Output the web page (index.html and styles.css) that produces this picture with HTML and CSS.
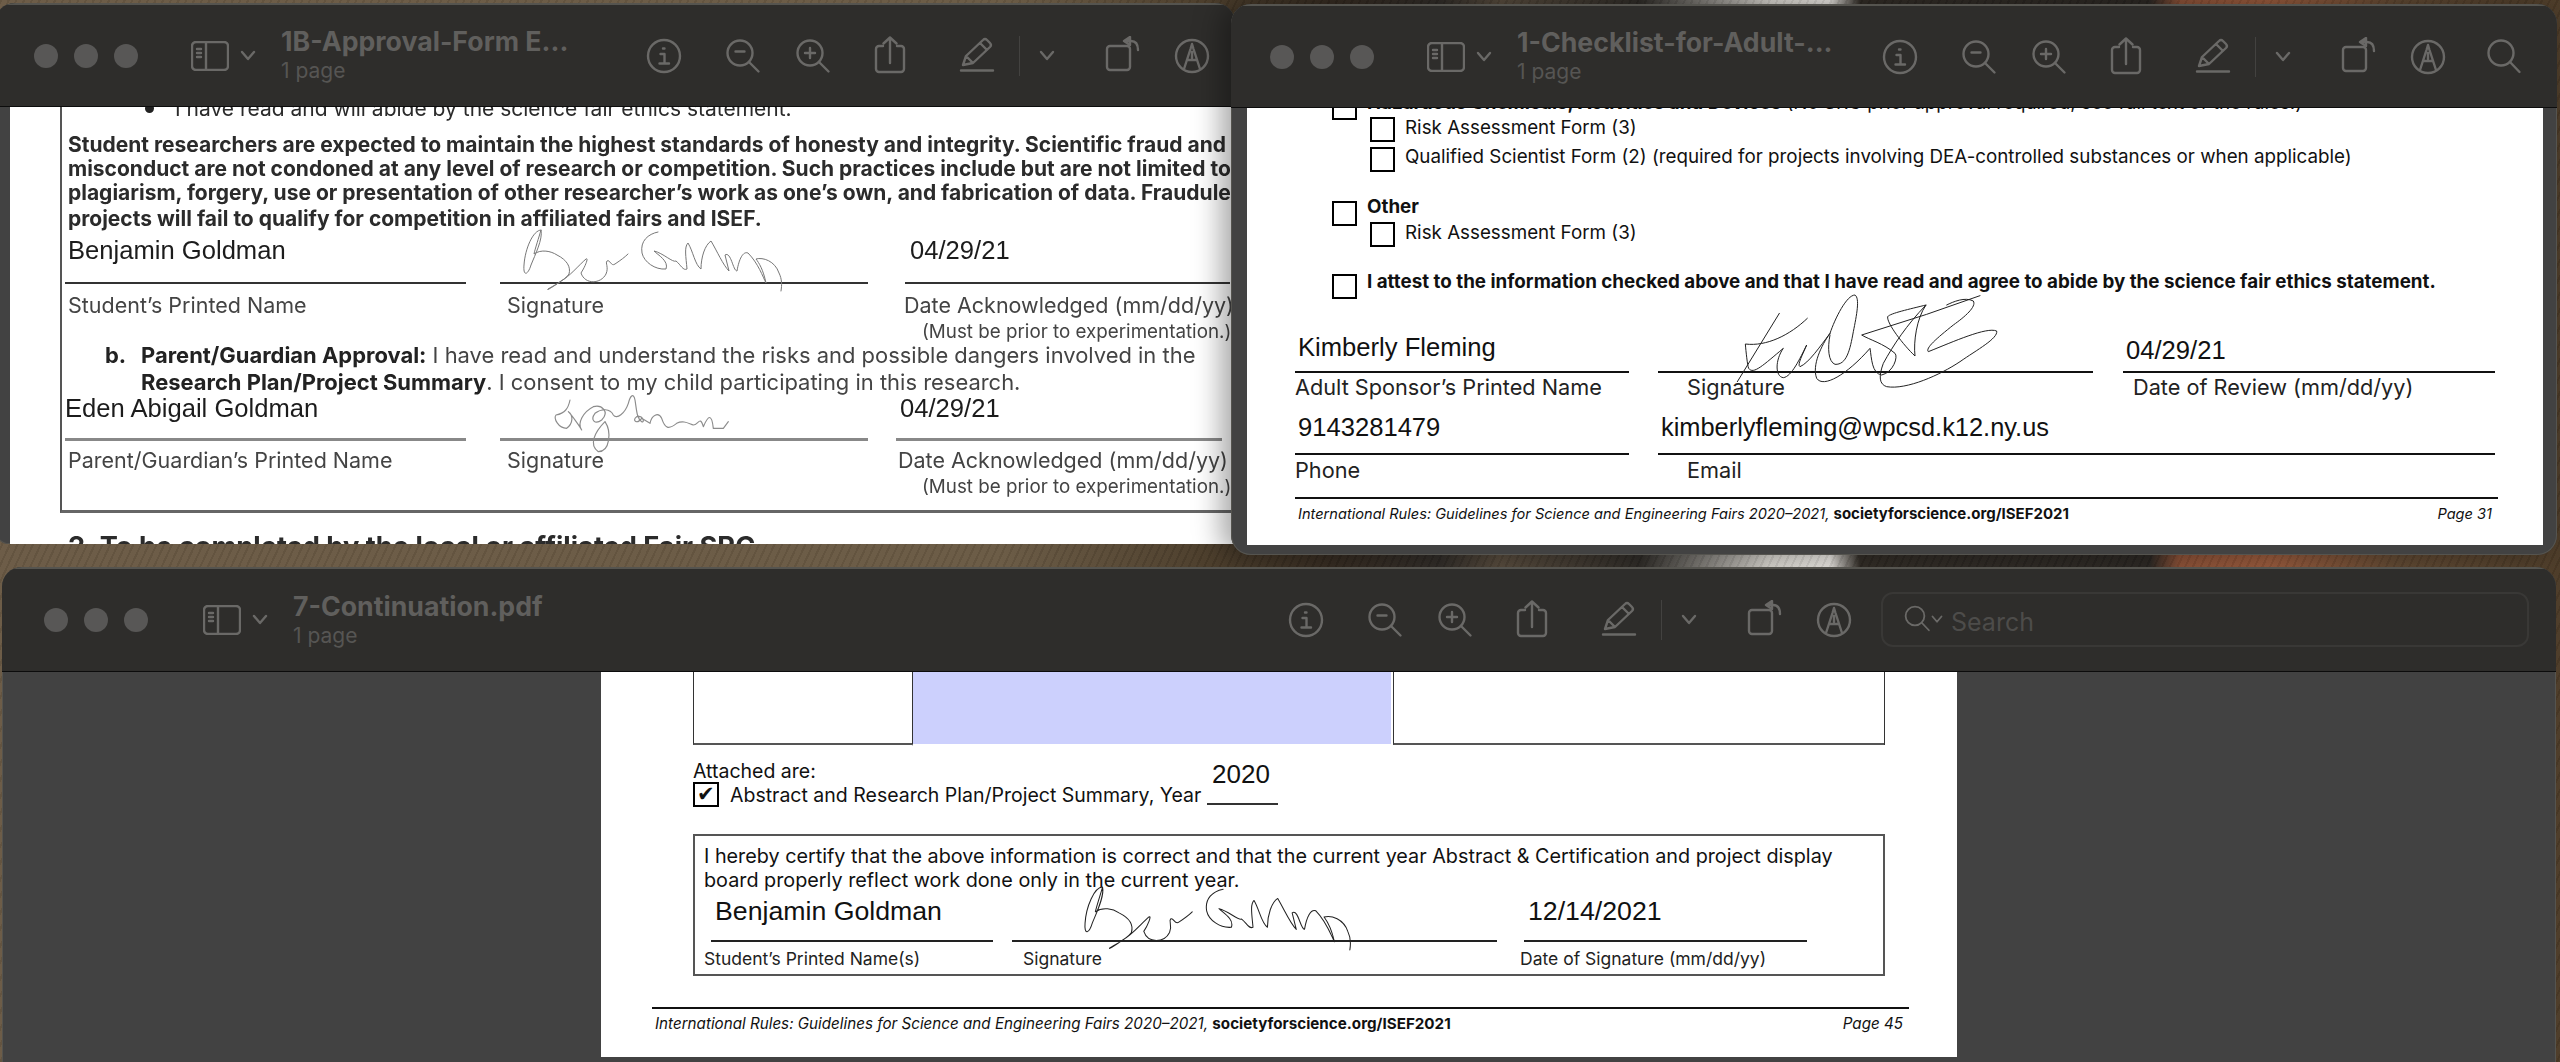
FILE: index.html
```html
<!DOCTYPE html>
<html lang="en">
<head>
  <meta charset="UTF-8">
  <meta name="viewport" content="width=device-width, initial-scale=1.0">
  <title>Preview windows</title>
  <link rel="stylesheet" href="styles.css">
</head>
<body>
  <svg class="defs" aria-hidden="true">
    <symbol id="i-sidebar" viewBox="0 0 38 30"><rect x="1" y="1" width="36" height="28" rx="4"/><path d="M15 1V29M6 8H10M6 12H10M6 16H10"/></symbol>
    <symbol id="i-chev" viewBox="0 0 16 12"><path d="M2 2L8 9L14 2"/></symbol>
    <symbol id="i-info" viewBox="0 0 40 40"><circle cx="20" cy="20" r="16"/><path d="M19 12.5H20.5M16.5 18H20.5V27.5M15.5 27.5H25"/></symbol>
    <symbol id="i-zoomout" viewBox="0 0 40 40"><circle cx="18" cy="17" r="12.5"/><path d="M27 26L36.5 35.5M13.5 15.5H22.5"/></symbol>
    <symbol id="i-zoomin" viewBox="0 0 40 40"><circle cx="18" cy="17" r="12.5"/><path d="M27 26L36.5 35.5M13 17H23M18 12V22"/></symbol>
    <symbol id="i-share" viewBox="0 0 40 40"><path d="M13 10H9A3 3 0 0 0 6 13V33A3 3 0 0 0 9 36H31A3 3 0 0 0 34 33V13A3 3 0 0 0 31 10H27M20 27V1.5M13.5 7.5L20 1.5L26.5 7.5"/></symbol>
    <symbol id="i-pen" viewBox="0 0 40 40"><path d="M6 29L9 20L26 4Q28 2 30 4L33 7Q35 9 33 11L16 27ZM9 20L16 27M23 7L30 14M4 34.5H36"/></symbol>
    <symbol id="i-rotate" viewBox="0 0 40 40"><rect x="6" y="10" width="23" height="24" rx="3"/><path d="M25 5H30C35 5 37 9 37 14"/><path class="fill" d="M23 5L29 1V9Z"/></symbol>
    <symbol id="i-markup" viewBox="0 0 40 40"><circle cx="20" cy="20" r="16"/><path d="M12 33L18.5 13L20 8L21.5 13L28 33M15.5 24H24.5M20 16V22"/></symbol>
    <symbol id="i-search" viewBox="0 0 40 40"><circle cx="16" cy="16" r="12.5"/><path d="M25 25L34.5 35"/></symbol>

    <symbol id="sig-ben" viewBox="0 0 262 66"><path d="M18 3C10 3 2 22 1 38C0 50 5 48 8 38C12 28 20 12 18 3C16 10 12 22 11 27C18 22 28 24 34 28C44 33 48 40 46 47C42 53 30 59 25 62C23 64 30 60 38 54C46 50 56 38 63 32C66 30 62 40 58 46C62 58 78 57 83 47C86 40 82 36 84 34C87 32 88 40 92 37C98 33 102 30 105 27"/><path d="M135 5C125 7 117 14 119 26C121 35 132 43 143 42C146 34 135 28 131 24C140 26 150 36 153 34C158 38 160 44 164 42C163 30 161 20 165 16C170 24 172 38 178 42C178 30 182 18 188 14C194 24 200 38 206 44L202 28C208 24 210 44 214 44C216 32 220 24 225 26C235 36 240 50 243 56C240 42 236 36 233 32C240 30 252 34 256 46C259 52 259 58 258 64"/></symbol>
  </svg>

  <section class="window win-a">
    <header class="toolbar">
      <div class="lights"><i></i><i></i><i></i></div>
      <svg class="ic-sidebar"><use href="#i-sidebar"/></svg>
      <svg class="ic-chev ic-side-chev"><use href="#i-chev"/></svg>
      <div class="titles">
        <div class="title">1B-Approval-Form E...</div>
        <div class="subtitle">1 page</div>
      </div>
      <svg class="tool"><use href="#i-info"/></svg>
      <svg class="tool t-out"><use href="#i-zoomout"/></svg>
      <svg class="tool t-in"><use href="#i-zoomin"/></svg>
      <svg class="tool t-share"><use href="#i-share"/></svg>
      <svg class="tool t-pen"><use href="#i-pen"/></svg>
      <span class="divider"></span>
      <svg class="ic-chev t-chev"><use href="#i-chev"/></svg>
      <svg class="tool t-rotate"><use href="#i-rotate"/></svg>
      <svg class="tool t-markup"><use href="#i-markup"/></svg>
    </header>
    <div class="content">
      <div class="page page-a">
        <div class="approval-box">
          <div class="bullet"><span class="dot"></span>I have read and will abide by the science fair ethics statement.</div>
          <p class="honesty">Student researchers are expected to maintain the highest standards of honesty and integrity. Scientific fraud and<br>misconduct are not condoned at any level of research or competition. Such practices include but are not limited to<br>plagiarism, forgery, use or presentation of other researcher’s work as one’s own, and fabrication of data. Fraudulent</p>
          <p class="honesty honesty-end">projects will fail to qualify for competition in affiliated fairs and ISEF.</p>

          <div class="fields row-student">
            <div class="f1"><div class="val">Benjamin Goldman</div><div class="lbl">Student’s Printed Name</div></div>
            <div class="f2"><div class="val"></div><div class="lbl">Signature</div></div>
            <div class="f3"><div class="val">04/29/21</div><div class="lbl">Date Acknowledged (mm/dd/yy)</div><div class="must">(Must be prior to experimentation.)</div></div>
          </div>

          <p class="consent"><b class="letter">b.</b><b>Parent/Guardian Approval:</b> I have read and understand the risks and possible dangers involved in the<br><b>Research Plan/Project Summary</b>. I consent to my child participating in this research.</p>

          <div class="fields row-parent">
            <div class="f1"><div class="val">Eden Abigail Goldman</div><div class="lbl">Parent/Guardian’s Printed Name</div></div>
            <div class="f2"><div class="val"></div><div class="lbl">Signature</div></div>
            <div class="f3"><div class="val">04/29/21</div><div class="lbl">Date Acknowledged (mm/dd/yy)</div><div class="must">(Must be prior to experimentation.)</div></div>
          </div>
        </div>
        <h2 class="next-step">2. To be completed by the local or affiliated Fair SRC</h2>
      </div>
      <svg class="sig sig-a1"><use href="#sig-ben"/></svg>
      <svg class="sig sig-a2" viewBox="0 0 720 300"><path d="M120 15C115 40 105 55 78 60C70 70 85 100 110 100C130 85 130 60 115 50C125 60 150 95 155 105C140 85 160 50 190 35C215 28 240 50 215 75C195 90 180 75 195 55C215 40 240 40 250 60C260 75 285 55 295 25C300 5 310 -10 315 15C320 45 320 70 335 80C345 85 340 60 320 65C305 75 320 90 335 70L360 85C365 60 385 50 395 70C405 100 415 105 440 85C460 75 475 85 490 90C505 90 510 60 520 95C535 60 545 55 550 100L580 100L595 80"/><path d="M225 80C245 110 240 170 205 170C175 150 195 110 225 80"/></svg>
    </div>
  </section>

  <section class="window win-b">
    <header class="toolbar">
      <div class="lights"><i></i><i></i><i></i></div>
      <svg class="ic-sidebar"><use href="#i-sidebar"/></svg>
      <svg class="ic-chev ic-side-chev"><use href="#i-chev"/></svg>
      <div class="titles">
        <div class="title">1-Checklist-for-Adult-...</div>
        <div class="subtitle">1 page</div>
      </div>
      <svg class="tool"><use href="#i-info"/></svg>
      <svg class="tool t-out"><use href="#i-zoomout"/></svg>
      <svg class="tool t-in"><use href="#i-zoomin"/></svg>
      <svg class="tool t-share"><use href="#i-share"/></svg>
      <svg class="tool t-pen"><use href="#i-pen"/></svg>
      <span class="divider"></span>
      <svg class="ic-chev t-chev"><use href="#i-chev"/></svg>
      <svg class="tool t-rotate"><use href="#i-rotate"/></svg>
      <svg class="tool t-markup"><use href="#i-markup"/></svg>
      <svg class="tool t-find"><use href="#i-search"/></svg>
    </header>
    <div class="content">
      <div class="page page-b">
        <div class="check main first"><span class="box"></span><span><b>Hazardous Chemicals, Activities and Devices</b> (No SRC prior approval required; see full text of the rules.)</span></div>
        <div class="check sub s1"><span class="box"></span><span>Risk Assessment Form (3)</span></div>
        <div class="check sub s2"><span class="box"></span><span>Qualified Scientist Form (2) (required for projects involving DEA-controlled substances or when applicable)</span></div>
        <div class="check main other"><span class="box"></span><b>Other</b></div>
        <div class="check sub s3"><span class="box"></span><span>Risk Assessment Form (3)</span></div>
        <div class="check main attest"><span class="box"></span><b>I attest to the information checked above and that I have read and agree to abide by the science fair ethics statement.</b></div>

        <div class="fields row-sponsor">
          <div class="f1"><div class="val">Kimberly Fleming</div><div class="lbl">Adult Sponsor’s Printed Name</div></div>
          <div class="f2"><div class="val"></div><div class="lbl">Signature</div></div>
          <div class="f3"><div class="val">04/29/21</div><div class="lbl">Date of Review (mm/dd/yy)</div></div>
        </div>
        <div class="fields row-contact">
          <div class="f1"><div class="val">9143281479</div><div class="lbl">Phone</div></div>
          <div class="f2"><div class="val">kimberlyfleming@wpcsd.k12.ny.us</div><div class="lbl">Email</div></div>
        </div>

        <footer class="rules-foot">
          <span>International Rules: Guidelines for Science and Engineering Fairs 2020–2021, <b>societyforscience.org/ISEF2021</b></span>
          <span>Page 31</span>
        </footer>
      </div>
      <svg class="sig sig-b" viewBox="0 0 900 360"><path d="M178 85L52 290"/><path d="M262 100C210 150 140 185 76 177C78 200 82 240 86 250C100 270 130 240 190 190C165 225 165 275 190 278C215 275 240 220 260 180C250 205 230 240 240 245C265 235 300 185 330 145C305 180 275 240 290 280C310 310 380 270 450 190C455 220 455 265 485 270C520 262 535 215 525 205C490 175 450 165 425 150L620 88L780 32"/><path d="M330 145C345 100 380 30 405 30C420 40 410 90 400 140C390 195 380 240 345 238C325 230 322 190 330 150"/><path d="M618 60C570 72 510 85 503 95C500 115 550 180 585 213C580 170 590 100 618 60C560 120 520 180 490 235C475 275 478 298 500 305C560 315 660 270 720 230C770 195 835 160 830 138C800 125 700 170 625 200C615 190 650 160 700 120C735 95 770 65 760 48C735 35 700 50 680 60"/></svg>
    </div>
  </section>

  <section class="window win-c">
    <header class="toolbar">
      <div class="lights"><i></i><i></i><i></i></div>
      <svg class="ic-sidebar"><use href="#i-sidebar"/></svg>
      <svg class="ic-chev ic-side-chev"><use href="#i-chev"/></svg>
      <div class="titles">
        <div class="title">7-Continuation.pdf</div>
        <div class="subtitle">1 page</div>
      </div>
      <svg class="tool"><use href="#i-info"/></svg>
      <svg class="tool t-out"><use href="#i-zoomout"/></svg>
      <svg class="tool t-in"><use href="#i-zoomin"/></svg>
      <svg class="tool t-share"><use href="#i-share"/></svg>
      <svg class="tool t-pen"><use href="#i-pen"/></svg>
      <span class="divider"></span>
      <svg class="ic-chev t-chev"><use href="#i-chev"/></svg>
      <svg class="tool t-rotate"><use href="#i-rotate"/></svg>
      <svg class="tool t-markup"><use href="#i-markup"/></svg>
      <div class="search">
        <svg class="search-ic"><use href="#i-search"/></svg>
        <svg class="ic-chev search-chev"><use href="#i-chev"/></svg>
        <span class="search-text">Search</span>
      </div>
    </header>
    <div class="content">
      <div class="page page-c">
        <div class="cells"><div></div><div class="cell-blue"></div><div></div></div>
        <div class="attached"><span>Attached are:</span><span class="year">2020</span></div>
        <div class="abstract"><span class="box box-checked">✔</span><span>Abstract and Research Plan/Project Summary, Year</span><span class="year-line"></span></div>
        <div class="certify">
          <p>I hereby certify that the above information is correct and that the current year Abstract &amp; Certification and project display<br>board properly reflect work done only in the current year.</p>
          <div class="fields row-cert">
            <div class="f1"><div class="val">Benjamin Goldman</div><div class="lbl">Student’s Printed Name(s)</div></div>
            <div class="f2"><div class="val"></div><div class="lbl">Signature</div></div>
            <div class="f3"><div class="val">12/14/2021</div><div class="lbl">Date of Signature (mm/dd/yy)</div></div>
          </div>
        </div>
        <footer class="rules-foot">
          <span>International Rules: Guidelines for Science and Engineering Fairs 2020–2021, <b>societyforscience.org/ISEF2021</b></span>
          <span>Page 45</span>
        </footer>
      </div>
      <svg class="sig sig-c"><use href="#sig-ben"/></svg>
    </div>
  </section>
</body>
</html>
```

FILE: styles.css
```css
* {
  box-sizing: border-box;
}
html, body {
  height: 100%;
}
body {
  margin: 0;
  position: relative;
  overflow: hidden;
  font-family: Inter, "Liberation Sans", sans-serif;
  background:
    repeating-linear-gradient(115deg, rgba(0,0,0,.07) 0 2px, rgba(255,255,255,.015) 2px 7px),
    linear-gradient(90deg, #6b5a45 0, #6a5a44 1000px, #4a3c2a 1210px, #33291f 1330px, #2e2a26 1440px, #54483a 1500px, #2c2925 1640px, #d5d2cc 1770px, #e6e3de 1830px, #2f2a24 1860px, #2a2622 2150px, #8a4f35 2180px, #96583a 2270px, #5d4630 2400px, #4c3b28 2560px);
}
.defs {
  display: none;
}

/* windows sit on the desktop at free positions */
.window {
  position: absolute;
  display: flex;
  flex-direction: column;
  overflow: hidden;
  background: #424242;
  border-radius: 20px;
  box-shadow: inset 0 0 0 1px #55544f;
}
.win-a {
  left: -5px;
  top: 3px;
  width: 1240px;
  height: 541px;
  border-radius: 20px 20px 0 14px;
}
.win-b {
  left: 1231px;
  top: 4px;
  width: 1326px;
  height: 551px;
  box-shadow: -10px 0 28px rgba(0,0,0,.35), inset 0 0 0 1px #55544f;
}
.win-c {
  left: 2px;
  top: 567px;
  width: 2554px;
  height: 520px;
}

/* toolbar */
.toolbar {
  flex: none;
  display: flex;
  align-items: center;
  height: 104px;
  padding-left: 39px;
  background: #2e2d2b;
  border-top: 2px solid #55544f;
  border-bottom: 1px solid #0c0c0c;
}
.lights {
  display: flex;
  gap: 16px;
}
.lights i {
  width: 24px;
  height: 24px;
  border-radius: 50%;
  background: #585756;
}
.toolbar svg {
  flex: none;
  fill: none;
  stroke: #6a6967;
  stroke-width: 2.4;
  stroke-linecap: round;
  stroke-linejoin: round;
}
.toolbar .fill {
  fill: #6a6967;
  stroke: none;
}
.ic-sidebar {
  width: 38px;
  height: 30px;
  margin-left: 53px;
}
.ic-chev {
  width: 16px;
  height: 12px;
}
.ic-side-chev {
  margin-left: 11px;
}
.titles {
  flex: none;
  width: 363px;
  margin-top: -3px;
  margin-left: 25px;
}
.title {
  font-size: 26.7px;
  line-height: 32px;
  font-weight: 700;
  color: #605f5d;
  white-space: nowrap;
}
.subtitle {
  font-size: 21px;
  line-height: 26px;
  color: #565553;
  margin-top: 1px;
}
.tool {
  width: 40px;
  height: 40px;
}
.t-out, .t-share { margin-left: 38px; }
.t-in { margin-left: 30px; }
.t-pen { margin-left: 47px; }
.divider {
  flex: none;
  width: 1px;
  height: 40px;
  margin-left: 22px;
  background: #434240;
}
.t-chev { margin-left: 19px; }
.t-rotate { margin-left: 46px; }
.t-markup { margin-left: 31px; }
.t-find { margin-left: 37px; }

.win-c .toolbar {
  padding-left: 42px;
  height: 105px;
}
.win-c .ic-sidebar { margin-left: 55px; }
.win-c .titles {
  width: 993px;
  margin-top: 0;
}
.win-c .title { margin-top: -1px; }

.search {
  flex: none;
  display: flex;
  align-items: center;
  width: 648px;
  height: 55px;
  margin-left: 27px;
  margin-top: -2px;
  padding-left: 20px;
  border: 2px solid #393836;
  border-radius: 12px;
  font-size: 25px;
  color: #4d4c4a;
}
.search-text {
  margin-top: 5px;
}
.search-ic {
  width: 30px;
  height: 30px;
}
.search-chev {
  width: 12px;
  height: 9px;
  margin-left: -2px;
  margin-right: 8px;
}

/* page content */
.content {
  position: relative;
  flex: 1;
  min-height: 0;
  overflow: hidden;
}
.page {
  background: #fff;
  color: #111;
  overflow: hidden;
}
.fields {
  display: grid;
}
.f1 { grid-column: 1; }
.f2 { grid-column: 3 / -1; }
.f3 { grid-column: 5; }
.row-student .f2, .row-parent .f2, .row-sponsor .f2, .row-cert .f2 { grid-column: 3; }
.val {
  font-family: "Liberation Sans", Arial, sans-serif;
  white-space: nowrap;
}
.lbl, .must {
  white-space: nowrap;
}
.box {
  flex: none;
  width: 25px;
  height: 25px;
  border: 2.5px solid #000;
}
.sig {
  position: absolute;
  overflow: visible;
  fill: none;
  stroke: #222;
  stroke-width: 1;
  stroke-linecap: round;
  stroke-linejoin: round;
}

/* approval form */
.page-a {
  width: 1225px;
  height: 437px;
  margin-left: 15px;
  color: #2b2b2b;
  filter: blur(.45px);
}
.approval-box {
  width: 1300px;
  margin-left: 50px;
  padding-bottom: 11px;
  border-left: 2px solid #555;
  border-bottom: 3px solid #666;
}
.bullet {
  display: flex;
  align-items: center;
  height: 24px;
  margin-top: -11px;
  padding-left: 83px;
  font-size: 21px;
  white-space: nowrap;
}
.dot {
  width: 9px;
  height: 9px;
  margin-right: 21px;
  border-radius: 50%;
  background: #222;
}
.honesty {
  margin: 13px 0 0 6px;
  font-size: 21px;
  line-height: 24px;
  font-weight: 700;
  white-space: nowrap;
}
.honesty-end {
  margin-top: 2px;
}
.row-student, .row-parent {
  grid-template-columns: 401px 34px 368px 37px 325px;
  margin-left: 3px;
}
.row-student { margin-top: 4px; }
.row-parent {
  grid-template-columns: 401px 34px 368px 28px 326px;
  margin-top: -3px;
}
.row-student .val, .row-parent .val {
  font-size: 25.6px;
  line-height: 30px;
  color: #1c1c1c;
}
.row-student .val {
  height: 49px;
  padding-left: 3px;
  border-bottom: 2px solid #333;
}
.row-parent .val {
  height: 48px;
  border-bottom: 3px solid #888;
}
.row-student .lbl, .row-parent .lbl {
  font-size: 21.5px;
  line-height: 24px;
  color: #444;
  padding-left: 3px;
}
.row-student .lbl { margin-top: 9px; }
.row-parent .lbl { margin-top: 7px; }
.row-student .f2 .lbl, .row-parent .f2 .lbl { padding-left: 7px; }
.row-student .f3 .val { padding-left: 5px; }
.row-student .f3 .lbl { margin-left: -4px; }
.row-parent .f3 .val { padding-left: 4px; }
.row-parent .f3 .lbl { padding-left: 2px; }
.must {
  margin-top: 3px;
  font-size: 18.8px;
  line-height: 24px;
  color: #444;
}
.row-student .must { padding-left: 17px; }
.row-parent .must { padding-left: 26px; }
.consent {
  margin: -2px 0 0 79px;
  font-size: 21.95px;
  line-height: 27px;
  color: #444;
  white-space: nowrap;
}
.consent b {
  color: #222;
}
.letter {
  display: inline-block;
  width: 36px;
  margin-left: -36px;
}
.next-step {
  margin: 19px 0 0 58px;
  font-size: 27.2px;
  line-height: 30px;
  font-weight: 700;
  white-space: nowrap;
}
.sig-a1 {
  left: 528px;
  top: 120px;
  width: 262px;
  height: 66px;
  stroke: #777;
}
.sig-a2 {
  left: 535px;
  top: 288px;
  width: 240px;
  height: 100px;
  stroke: #8c8c8c;
  stroke-width: 3.5;
}

/* checklist */
.page-b {
  width: 1296px;
  height: 437px;
  margin-left: 16px;
  padding-left: 48px;
}
.check {
  display: flex;
  font-size: 18.8px;
  line-height: 24px;
  white-space: nowrap;
}
.check.main {
  margin-left: 37px;
  gap: 10px;
}
.check.sub {
  margin-left: 75px;
  gap: 10px;
  align-items: center;
}
.check.main > :last-child {
  line-height: 20px;
  margin-top: -2px;
}
.first { margin-top: -13px; }
.s1 { margin-top: -3px; }
.s1 > span:last-child, .s3 > span:last-child { margin-top: -3px; }
.s2 > span:last-child { margin-top: -5px; }
.s2 { margin-top: 5px; }
.other { margin-top: 29px; }
.check.other > :last-child { margin-top: -4px; }
.s3 { margin-top: -4px; }
.attest { margin-top: 27px; }

.row-sponsor, .row-contact {
  grid-template-columns: 334px 29px 435px 30px 372px;
}
.row-sponsor { margin-top: 33px; }
.row-contact { margin-top: 13px; }
.row-sponsor .val, .row-contact .val {
  font-size: 25.6px;
  line-height: 30px;
  border-bottom: 2px solid #111;
  padding-left: 3px;
}
.row-sponsor .val { height: 41px; }
.row-contact .val { height: 43px; }
.row-contact .f2 .val { font-size: 25.4px; }
.row-sponsor .f3 .val { padding-top: 3px; }
.row-sponsor .lbl, .row-contact .lbl {
  font-size: 21.7px;
  line-height: 24px;
  color: #222;
}
.row-sponsor .lbl { margin-top: 2px; }
.row-contact .lbl { margin-top: 3px; }
.row-sponsor .f2 .lbl, .row-contact .f2 .lbl { padding-left: 29px; }
.row-sponsor .f3 .lbl { padding-left: 10px; }

.rules-foot {
  display: flex;
  justify-content: space-between;
  border-top: 2px solid #111;
  padding: 5px 6px 0 3px;
  line-height: 20px;
  font-style: italic;
  white-space: nowrap;
}
.rules-foot b {
  font-style: normal;
}
.page-b .rules-foot {
  width: 1203px;
  margin-top: 15px;
  font-size: 14.6px;
}
.page-b .rules-foot b { font-size: 15px; }
.sig-b {
  left: 489px;
  top: 177px;
  width: 300px;
  height: 120px;
  stroke-width: 3;
}

/* continuation */
.page-c {
  width: 1356px;
  height: 385px;
  margin-left: 599px;
  padding-left: 92px;
}
.cells {
  display: grid;
  grid-template-columns: 219px 481px 1fr;
  width: 1192px;
  height: 73px;
  border-right: 1px solid #333;
}
.cells > div {
  border-left: 1px solid #333;
  border-bottom: 2px solid #555;
}
.cells .cell-blue {
  margin-bottom: -1px;
  background: #ccd0fd;
  box-shadow: inset -2px 0 #fff;
  border-bottom-color: #fff;
}
.attached {
  display: grid;
  grid-template-columns: 519px auto;
  margin-top: 14px;
  font-size: 19.5px;
  line-height: 24px;
}
.year {
  font-family: "Liberation Sans", Arial, sans-serif;
  font-size: 26px;
  line-height: 30px;
}
.abstract {
  display: flex;
  align-items: center;
  margin-top: -7px;
  font-size: 19.5px;
  line-height: 24px;
}
.box-checked {
  width: 26px;
  margin-right: 11px;
  font-size: 21px;
  line-height: 20px;
  text-align: center;
}
.year-line {
  width: 71px;
  height: 20px;
  margin-left: 6px;
  border-bottom: 2px solid #333;
}
.certify {
  width: 1192px;
  height: 142px;
  margin-top: 27px;
  border: 2px solid #555;
}
.certify p {
  margin: 8px 0 0 9px;
  font-size: 19.8px;
  line-height: 24px;
  white-space: nowrap;
}
.row-cert {
  grid-template-columns: 282px 19px 485px 27px 283px;
  margin: 4px 0 0 16px;
}
.row-cert .val {
  height: 46px;
  padding-left: 4px;
  font-size: 26.7px;
  line-height: 30px;
  border-bottom: 2px solid #222;
}
.row-cert .lbl {
  margin-top: 7px;
  font-size: 17.5px;
  line-height: 20px;
  color: #222;
}
.row-cert .f1 .lbl { margin-left: -7px; }
.row-cert .f2 .lbl { padding-left: 11px; }
.row-cert .f3 .lbl { margin-left: -4px; }
.page-c .rules-foot {
  width: 1257px;
  margin: 31px 0 0 -41px;
  font-size: 15.2px;
}
.sig-c {
  left: 1081px;
  top: 212px;
  width: 272px;
  height: 68px;
}
```
